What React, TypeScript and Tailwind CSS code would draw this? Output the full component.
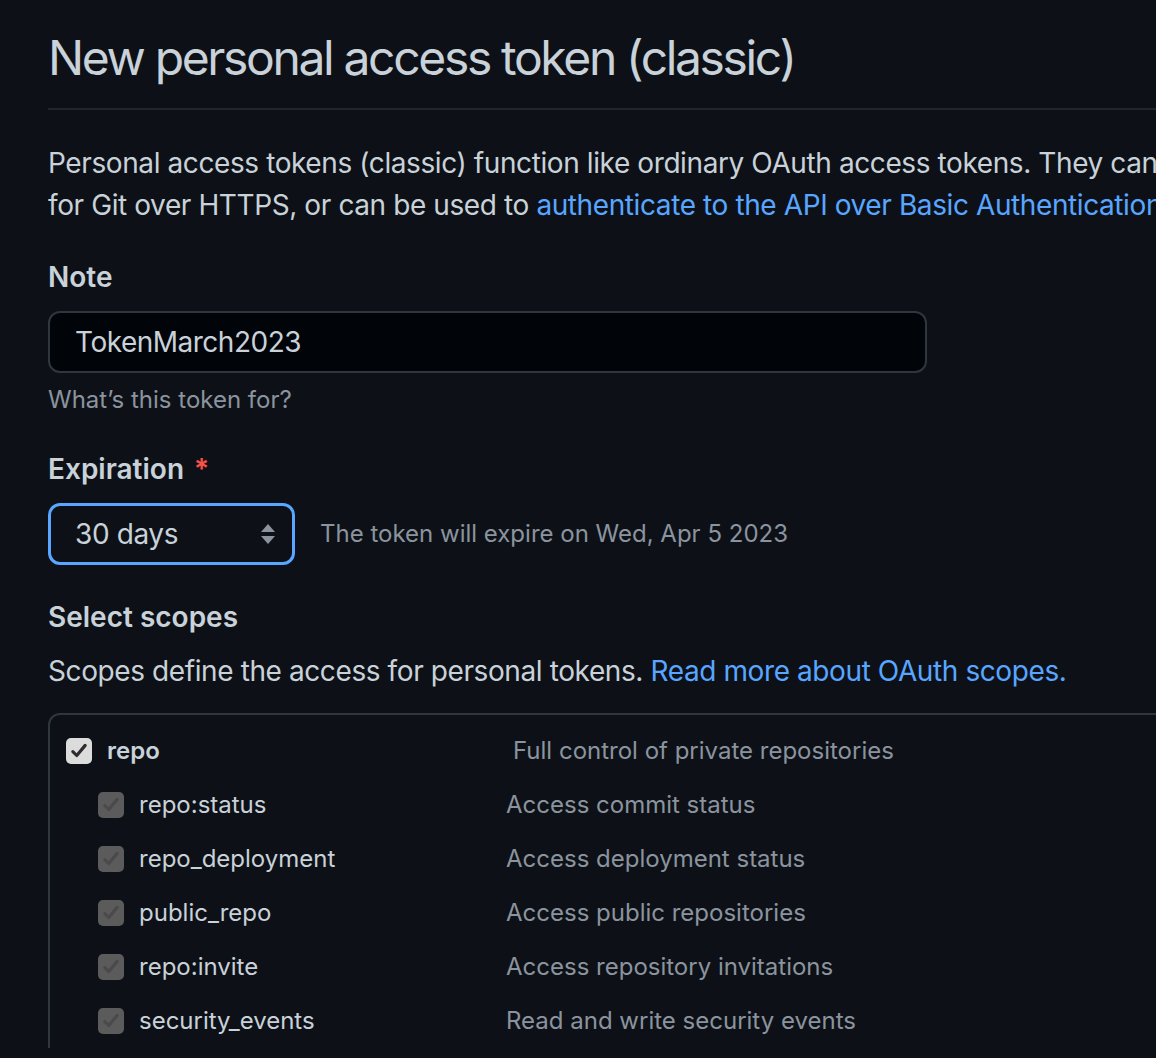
const scopes = [
  { name: 'repo:status', desc: 'Access commit status' },
  { name: 'repo_deployment', desc: 'Access deployment status' },
  { name: 'public_repo', desc: 'Access public repositories' },
  { name: 'repo:invite', desc: 'Access repository invitations' },
  { name: 'security_events', desc: 'Read and write security events' },
];

function Check({ disabled }: { disabled?: boolean }) {
  return (
    <span
      className={
        'flex h-[26px] w-[26px] shrink-0 items-center justify-center rounded-[5px] ' +
        (disabled ? 'bg-[#5b5b5c]' : 'bg-[#dcdcdc]')
      }
    >
      <svg width="18" height="18" viewBox="0 0 16 16" fill="none">
        <path
          d="M2.5 8.5l3.5 3.5 7.5-9"
          stroke={disabled ? '#4a4a4b' : '#2d2d2d'}
          strokeWidth="2.8"
          strokeLinecap="round"
          strokeLinejoin="round"
        />
      </svg>
    </span>
  );
}

export default function App() {
  return (
    <div
      className="min-h-[1058px] w-full overflow-hidden bg-[#0d1117] text-[#c9d1d9]"
      style={{ fontFamily: 'Inter, "Noto Sans", sans-serif' }}
    >
      <div className="w-[1400px] pl-12">
        {/* Header */}
        <h1 className="pt-[28px] pb-[20px] text-[48px] font-normal leading-[60px] tracking-[-2.35px] border-b-2 border-[#21262d]">
          New personal access token (classic)
        </h1>

        <p className="mt-[32px] text-[28px] leading-[42px] tracking-[-0.4px] whitespace-nowrap">
          Personal access tokens (classic) function like ordinary OAuth access tokens. They can be used instead of a password
          <br />
          for Git over HTTPS, or can be used to{' '}
          <a className="text-[#58a6ff]">authenticate to the API over Basic Authentication</a>.
        </p>

        {/* Note */}
        <div className="mt-[30px] text-[28px] font-semibold leading-[42px]">Note</div>
        <div className="mt-[13px] flex h-[62px] w-[879px] items-center rounded-[12px] border-2 border-[#30363d] bg-[#010409] px-[25px] text-[28px] tracking-[-0.5px]">
          TokenMarch2023
        </div>
        <div className="mt-[9px] text-[24px] leading-[36px] text-[#8b949e]">What’s this token for?</div>

        {/* Expiration */}
        <div className="mt-[30px] flex text-[28px] font-semibold leading-[42px]">
          Expiration <span className="ml-[10px] text-[#f85149]">*</span>
        </div>
        <div className="mt-[13px] flex items-center">
          <div className="flex h-[62px] w-[247px] items-center justify-between rounded-[12px] border-[3px] border-[#58a6ff] pl-[24px] pr-[15px] text-[28px] tracking-[-0.4px]">
            30 days
            <svg width="18" height="22" viewBox="0 0 18 22">
              <path d="M9 1l7 8H2z" fill="#8b949e" />
              <path d="M9 21l7-8H2z" fill="#8b949e" />
            </svg>
          </div>
          <span className="ml-[25px] text-[24px] text-[#8b949e]">The token will expire on Wed, Apr 5 2023</span>
        </div>

        {/* Scopes */}
        <div className="mt-[31px] text-[28px] font-semibold leading-[42px]">Select scopes</div>
        <p className="mt-[12px] text-[28px] leading-[42px] tracking-[-0.4px]">
          Scopes define the access for personal tokens.{' '}
          <a className="text-[#58a6ff]">Read more about OAuth scopes.</a>
        </p>

        <div className="mt-[21px] rounded-tl-[12px] border-l-2 border-t-2 border-[#30363d] pt-[9px]">
          <div className="flex h-[54px] items-center pl-[16px]">
            <div className="flex w-[447px] items-center gap-[15px]">
              <Check />
              <span className="text-[24px] font-semibold">repo</span>
            </div>
            <span className="text-[24px] text-[#8b949e]">Full control of private repositories</span>
          </div>
          {scopes.map((s) => (
            <div key={s.name} className="flex h-[54px] items-center pl-[48px]">
              <div className="flex w-[408px] items-center gap-[15px]">
                <Check disabled />
                <span className="text-[24px]">{s.name}</span>
              </div>
              <span className="text-[24px] text-[#8b949e]">{s.desc}</span>
            </div>
          ))}
        </div>
      </div>
    </div>
  );
}
